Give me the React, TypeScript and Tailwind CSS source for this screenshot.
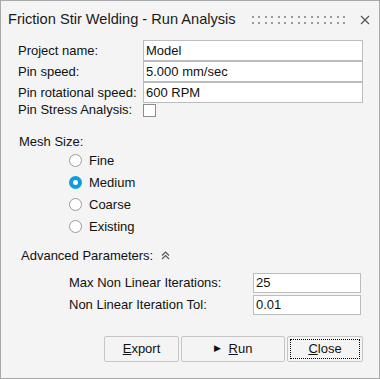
import { ReactNode } from 'react'

const font = { fontFamily: '"Liberation Sans", Arial, sans-serif' }

function Field({ label, value }: { label: string; value: string }) {
  return (
    <div className="flex h-[21px] items-center">
      <span className="w-[125px] shrink-0">{label}</span>
      <div className="flex h-[21px] flex-1 items-center border border-[#bcbcbc] bg-white px-[2px]">
        {value}
      </div>
    </div>
  )
}

function Radio({ label, checked }: { label: string; checked?: boolean }) {
  return (
    <div className="flex h-[22px] items-center gap-[7px] pl-[51px]">
      {checked ? (
        <span className="flex h-[13px] w-[13px] items-center justify-center rounded-full bg-[#0f9be0]">
          <span className="h-[5px] w-[5px] rounded-full bg-white" />
        </span>
      ) : (
        <span className="h-[13px] w-[13px] rounded-full border border-[#9a9a9a] bg-white" />
      )}
      <span>{label}</span>
    </div>
  )
}

function Btn({ children, width, focus }: { children: ReactNode; width: string; focus?: boolean }) {
  return (
    <button
      type="button"
      className={`flex h-[26px] ${width} items-center justify-center rounded-[2px] border border-[#c6c6c6] bg-[#f4f4f4] p-[2px]`}
    >
      <span
        className={`flex h-full w-full items-center justify-center ${focus ? 'border border-dotted border-black' : ''}`}
      >
        {children}
      </span>
    </button>
  )
}

export default function App() {
  return (
    <div
      className="flex h-[379px] w-[380px] flex-col border border-[#a8a8a8] bg-[#f4f4f4] text-[13px] text-[#111]"
      style={font}
    >
      <header className="flex h-[38px] items-center pl-[7px] pr-[9px]">
        <span className="text-[14.6px] text-[#1a1a1a]">Friction Stir Welding - Run Analysis</span>
        <div className="ml-[16px] grid flex-1 grid-cols-[repeat(15,1fr)] gap-y-[4px] pr-[10px]">
          {Array.from({ length: 30 }).map((_, i) => (
            <span key={i} className="h-[2px] w-[2px] bg-[#9a9a9a]" />
          ))}
        </div>
        <svg width="10" height="10" viewBox="0 0 10 10" className="text-[#555]">
          <path d="M1 1L9 9M9 1L1 9" stroke="currentColor" strokeWidth="1.2" />
        </svg>
      </header>

      <main className="flex flex-1 flex-col pl-[17px] pr-[16px]">
        <div className="mt-[1px] flex flex-col">
          <Field label="Project name:" value="Model" />
          <Field label="Pin speed:" value="5.000 mm/sec" />
          <Field label="Pin rotational speed:" value="600 RPM" />
          <div className="flex h-[14px] items-center">
            <span className="w-[125px] shrink-0">Pin Stress Analysis:</span>
            <span className="h-[13px] w-[13px] border border-[#8c8c8c] bg-white" />
          </div>
        </div>

        <div className="mt-[15px] pl-[1px]">Mesh Size:</div>
        <div className="mt-[-2px] flex flex-col">
          <Radio label="Fine" />
          <Radio label="Medium" checked />
          <Radio label="Coarse" />
          <Radio label="Existing" />
        </div>

        <div className="mt-[8px] flex items-center gap-[8px] pl-[3px]">
          <span>Advanced Parameters:</span>
          <svg width="9" height="9" viewBox="0 0 9 9" className="text-[#555]">
            <path d="M1 4.5L4.5 1L8 4.5M1 8L4.5 4.5L8 8" fill="none" stroke="currentColor" strokeWidth="1.1" />
          </svg>
        </div>

        <div className="mt-[8px] flex flex-col gap-[2px] pl-[51px] pr-[2px]">
          <div className="flex h-[20px] items-center">
            <span className="w-[184px] shrink-0">Max Non Linear Iterations:</span>
            <div className="flex h-[20px] flex-1 items-center border border-[#bcbcbc] bg-white px-[2px]">25</div>
          </div>
          <div className="flex h-[20px] items-center">
            <span className="w-[184px] shrink-0">Non Linear Iteration Tol:</span>
            <div className="flex h-[20px] flex-1 items-center border border-[#bcbcbc] bg-white px-[2px]">0.01</div>
          </div>
        </div>

        <div className="mt-[21px] flex justify-end gap-[2px] pr-0">
          <Btn width="w-[75px]">
            <span><u>E</u>xport</span>
          </Btn>
          <Btn width="w-[104px]">
            <span className="mr-[8px] text-[9px]">▶</span>
            <span><u>R</u>un</span>
          </Btn>
          <Btn width="w-[76px]" focus>
            <span><u>C</u>lose</span>
          </Btn>
        </div>
      </main>
    </div>
  )
}
